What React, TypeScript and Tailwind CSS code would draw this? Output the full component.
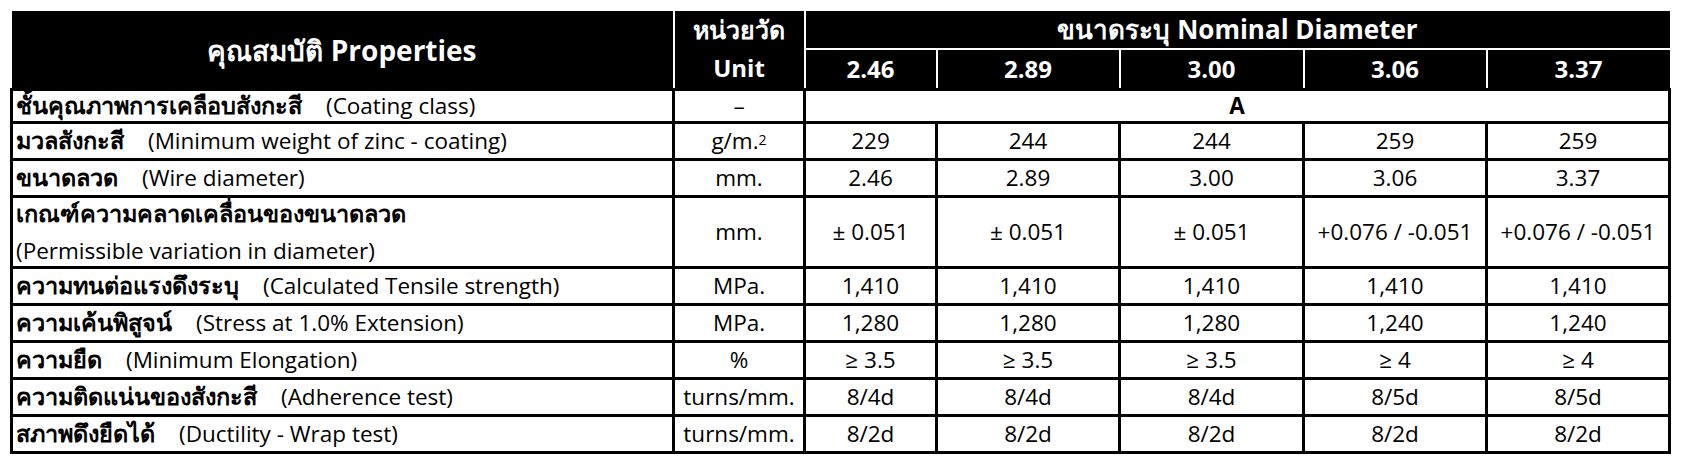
import React from "react";

type Row = {
  th: string;
  en: string;
  unit: React.ReactNode;
  values: string[];
  tall?: boolean;
};

const SIZES = ["2.46", "2.89", "3.00", "3.06", "3.37"];

const ROWS: Row[] = [
  { th: "มวลสังกะสี", en: "(Minimum weight of zinc - coating)", unit: <>g/m.<sup className="text-[14px] relative -top-[4px]">2</sup></>, values: ["229", "244", "244", "259", "259"] },
  { th: "ขนาดลวด", en: "(Wire diameter)", unit: "mm.", values: ["2.46", "2.89", "3.00", "3.06", "3.37"] },
  { th: "เกณฑ์ความคลาดเคลื่อนของขนาดลวด", en: "(Permissible variation in diameter)", unit: "mm.", values: ["± 0.051", "± 0.051", "± 0.051", "+0.076 / -0.051", "+0.076 / -0.051"], tall: true },
  { th: "ความทนต่อแรงดึงระบุ", en: "(Calculated Tensile strength)", unit: "MPa.", values: ["1,410", "1,410", "1,410", "1,410", "1,410"] },
  { th: "ความเค้นพิสูจน์", en: "(Stress at 1.0% Extension)", unit: "MPa.", values: ["1,280", "1,280", "1,280", "1,240", "1,240"] },
  { th: "ความยืด", en: "(Minimum Elongation)", unit: "%", values: ["≥ 3.5", "≥ 3.5", "≥ 3.5", "≥ 4", "≥ 4"] },
  { th: "ความติดแน่นของสังกะสี", en: "(Adherence test)", unit: "turns/mm.", values: ["8/4d", "8/4d", "8/4d", "8/5d", "8/5d"] },
  { th: "สภาพดึงยืดได้", en: "(Ductility - Wrap test)", unit: "turns/mm.", values: ["8/2d", "8/2d", "8/2d", "8/2d", "8/2d"] },
];

const cell = "border-[3px] border-black px-[3px] text-center whitespace-nowrap";

export default function App() {
  return (
    <div className="w-[1681px] h-[470px] bg-white pt-[11px] pl-[10px] font-['Open_Sans','Noto_Sans',sans-serif] text-black text-[22.5px] leading-none">
      <table className="border-collapse table-fixed w-[1658px]">
        <colgroup>
          <col className="w-[662px]" />
          <col className="w-[131px]" />
          <col className="w-[132px]" />
          <col className="w-[183px]" />
          <col className="w-[184px]" />
          <col className="w-[183px]" />
          <col className="w-[183px]" />
        </colgroup>
        <thead className="bg-black text-white font-bold text-[24px]">
          <tr className="h-[37px]">
            <th rowSpan={2} className="border-r-2 border-white text-center font-bold text-[28px]">
              คุณสมบัติ Properties
            </th>
            <th rowSpan={2} className="border-r-2 border-white font-bold p-0">
              <div className="flex flex-col">
                <span className="h-[37px] flex items-center justify-center text-[25px]">หน่วยวัด</span>
                <span className="h-[40px] flex items-center justify-center">Unit</span>
              </div>
            </th>
            <th colSpan={5} className="border-b-2 border-white font-bold text-[26px]">
              ขนาดระบุ Nominal Diameter
            </th>
          </tr>
          <tr className="h-[40px]">
            {SIZES.map((s, i) => (
              <th key={s} className={`font-bold ${i < 4 ? "border-r-2 border-white" : ""}`}>
                {s}
              </th>
            ))}
          </tr>
        </thead>
        <tbody>
          <tr className="h-[33px]">
            <td className="border-[3px] border-black px-[3px] text-left whitespace-nowrap">
              <span className="font-bold text-[23.5px]">ชั้นคุณภาพการเคลือบสังกะสี</span>
              <span className="ml-[24px]">(Coating class)</span>
            </td>
            <td className={cell}>–</td>
            <td colSpan={5} className={`${cell} font-bold`}>A</td>
          </tr>
          {ROWS.map((r) => (
            <tr key={r.th} className={r.tall ? "h-[71px]" : "h-[37px]"}>
              <td className="border-[3px] border-black px-[3px] text-left whitespace-nowrap">
                {r.tall ? (
                  <div className="flex flex-col gap-[14px]">
                    <span className="font-bold text-[23.5px]">{r.th}</span>
                    <span>{r.en}</span>
                  </div>
                ) : (
                  <>
                    <span className="font-bold text-[23.5px]">{r.th}</span>
                    <span className="ml-[24px]">{r.en}</span>
                  </>
                )}
              </td>
              <td className={cell}>{r.unit}</td>
              {r.values.map((v, i) => (
                <td key={i} className={cell}>
                  {v}
                </td>
              ))}
            </tr>
          ))}
        </tbody>
      </table>
    </div>
  );
}
